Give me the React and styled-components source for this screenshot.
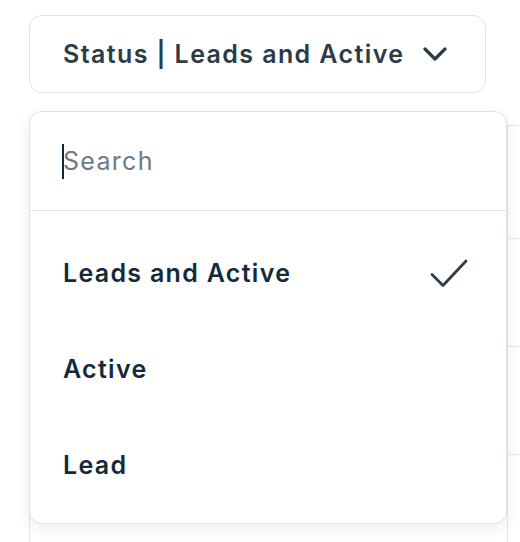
import React from "react";
import styled, { createGlobalStyle } from "styled-components";

const GlobalStyle = createGlobalStyle`
  html, body {
    margin: 0;
    padding: 0;
    background: #ffffff;
    font-family: Inter, "Noto Sans", sans-serif;
  }
`;

const Page = styled.div`
  position: relative;
  width: 520px;
  height: 542px;
  overflow: hidden;
  box-sizing: border-box;
  padding: 15px 0 0 29px;
`;

const Trigger = styled.button`
  box-sizing: border-box;
  width: 457px;
  height: 78px;
  display: flex;
  align-items: center;
  gap: 19px;
  padding: 0 36px 0 33px;
  background: #fff;
  border: 1px solid #dde1e5;
  border-radius: 13px;
  font-family: Inter, sans-serif;
  font-size: 25px;
  font-weight: 600;
  letter-spacing: 1.4px;
  color: #2b3b48;
  cursor: pointer;
`;

const TriggerLabel = styled.span`
  white-space: nowrap;
`;

// faint table behind the menu
const Table = styled.div`
  margin-top: 32px;
  width: 600px;
  border-left: 1px solid #e3e6e9;
  display: grid;
  grid-template-columns: 478px 1fr;
`;

const Cell = styled.div`
  height: ${(p) => p.$h}px;
  border-top: 1px solid #e3e6e9;
  border-right: ${(p) => (p.$divider ? "1px solid #e3e6e9" : "none")};
  box-sizing: border-box;
`;

const Menu = styled.div`
  position: absolute;
  top: 111px;
  left: 29px;
  width: 478px;
  height: 413px;
  box-sizing: border-box;
  background: #fff;
  border: 1px solid #e0e3e6;
  border-radius: 13px;
  box-shadow: 0 4px 14px rgba(20, 40, 60, 0.09);
  display: flex;
  flex-direction: column;
`;

const SearchBox = styled.div`
  height: 99px;
  display: flex;
  align-items: center;
  padding-left: 32px;
  border-bottom: 1px solid #dfe3e6;
`;

const Caret = styled.span`
  width: 2px;
  height: 35px;
  background: #0f2433;
  margin-right: -1px;
`;

const SearchInput = styled.input`
  border: none;
  outline: none;
  padding: 0;
  font-family: Inter, sans-serif;
  font-size: 25px;
  letter-spacing: 1.3px;
  color: #142a3b;
  background: transparent;
  &::placeholder {
    color: #6a7b88;
  }
`;

const List = styled.ul`
  list-style: none;
  margin: 0;
  padding: 14px 0 10px;
`;

const Item = styled.li`
  height: 96px;
  display: flex;
  align-items: center;
  justify-content: space-between;
  padding: 0 38px 0 33px;
  font-size: 25px;
  font-weight: 600;
  letter-spacing: 1.3px;
  color: #142a3b;
  cursor: pointer;
`;

const Chevron = () => (
  <svg width="24" height="14" viewBox="0 0 24 14" fill="none">
    <path
      d="M2 2l10 10L22 2"
      stroke="#2b3d4b"
      strokeWidth="3.2"
      strokeLinecap="round"
      strokeLinejoin="round"
    />
  </svg>
);

const Check = () => (
  <svg width="38" height="29" viewBox="0 0 38 29" fill="none">
    <path
      d="M2 15.5l11 11L36 2"
      stroke="#2d3e4c"
      strokeWidth="2.8"
      strokeLinecap="round"
      strokeLinejoin="round"
    />
  </svg>
);

const options = ["Leads and Active", "Active", "Lead"];

export default function App() {
  const selected = "Leads and Active";
  const rows = [113, 108, 108, 108];
  return (
    <>
      <GlobalStyle />
      <Page>
        <Trigger>
          <TriggerLabel>Status | {selected}</TriggerLabel>
          <Chevron />
        </Trigger>
        <Table>
          {rows.map((h, i) => (
            <React.Fragment key={i}>
              <Cell $h={h} $divider />
              <Cell $h={h} />
            </React.Fragment>
          ))}
        </Table>
        <Menu>
          <SearchBox>
            <Caret />
            <SearchInput placeholder="Search" />
          </SearchBox>
          <List>
            {options.map((o) => (
              <Item key={o}>
                {o}
                {o === selected && <Check />}
              </Item>
            ))}
          </List>
        </Menu>
      </Page>
    </>
  );
}
